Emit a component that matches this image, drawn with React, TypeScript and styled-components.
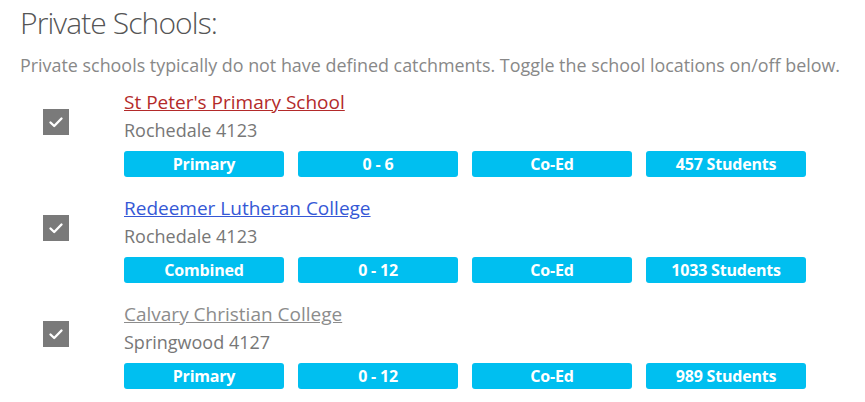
import styled, { createGlobalStyle } from "styled-components";

const GlobalStyle = createGlobalStyle`
  body {
    margin: 0;
    background: #ffffff;
    font-family: "Open Sans", "Liberation Sans", sans-serif;
  }
`;

const Wrapper = styled.div`
  padding: 3px 20px 0 20px;
`;

const Title = styled.h2`
  margin: 0;
  font-size: 30px;
  font-weight: 300;
  letter-spacing: -0.9px;
  line-height: 40px;
  color: #555;
`;

const Intro = styled.p`
  margin: 10px 0 11px 0;
  font-size: 17.9px;
  line-height: 24px;
  white-space: nowrap;
  color: #888;
`;

const List = styled.div`
  display: flex;
  flex-direction: column;
  gap: 17px;
`;

const Row = styled.div`
  display: grid;
  grid-template-columns: 104px 1fr;
`;

const CheckCell = styled.div`
  padding: 21px 0 0 23px;
`;

const Check = styled.span`
  display: flex;
  align-items: center;
  justify-content: center;
  width: 26px;
  height: 26px;
  background: #7a7a7a;
`;

const Info = styled.div`
  display: flex;
  flex-direction: column;
`;

const Name = styled.a<{ $tone: string }>`
  font-size: 19px;
  line-height: 28px;
  color: ${(p) => p.$tone};
  text-decoration: underline;
  align-self: flex-start;
`;

const Place = styled.div`
  font-size: 18px;
  line-height: 28px;
  color: #777;
`;

const Tags = styled.div`
  display: flex;
  gap: 14px;
  margin-top: 7px;
`;

const Tag = styled.div`
  width: 160px;
  height: 26px;
  border-radius: 3px;
  background: #00bff0;
  color: #fff;
  font-size: 16px;
  font-weight: 700;
  letter-spacing: -0.2px;
  line-height: 26px;
  text-align: center;
`;

type School = {
  name: string;
  tone: string;
  place: string;
  tags: string[];
};

const schools: School[] = [
  {
    name: "St Peter's Primary School",
    tone: "#b32a2a",
    place: "Rochedale 4123",
    tags: ["Primary", "0 - 6", "Co-Ed", "457 Students"],
  },
  {
    name: "Redeemer Lutheran College",
    tone: "#3558d6",
    place: "Rochedale 4123",
    tags: ["Combined", "0 - 12", "Co-Ed", "1033 Students"],
  },
  {
    name: "Calvary Christian College",
    tone: "#8c8c8c",
    place: "Springwood 4127",
    tags: ["Primary", "0 - 12", "Co-Ed", "989 Students"],
  },
];

const Tick = () => (
  <svg width="16" height="16" viewBox="0 0 16 16">
    <path
      d="M2.5 8.5 L6.2 12 L13.5 4.5"
      fill="none"
      stroke="#fff"
      strokeWidth="2.4"
      strokeLinecap="round"
      strokeLinejoin="round"
    />
  </svg>
);

const App = () => (
  <Wrapper>
    <GlobalStyle />
    <Title>Private Schools:</Title>
    <Intro>
      Private schools typically do not have defined catchments. Toggle the
      school locations on/off below.
    </Intro>
    <List>
      {schools.map((s) => (
        <Row key={s.name}>
          <CheckCell>
            <Check>
              <Tick />
            </Check>
          </CheckCell>
          <Info>
            <Name href="#" $tone={s.tone}>
              {s.name}
            </Name>
            <Place>{s.place}</Place>
            <Tags>
              {s.tags.map((t) => (
                <Tag key={t}>{t}</Tag>
              ))}
            </Tags>
          </Info>
        </Row>
      ))}
    </List>
  </Wrapper>
);

export default App;
